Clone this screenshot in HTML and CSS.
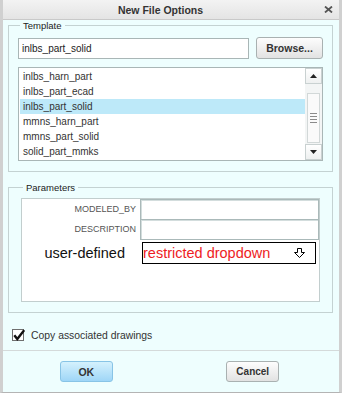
FILE: index.html
```html
<!DOCTYPE html>
<html>
<head>
<meta charset="utf-8">
<link rel="stylesheet" href="styles.css">
</head>
<body>
<div class="window">
  <div class="titlebar">
    <span class="title">New File Options</span>
    <span class="close"><svg width="9" height="7" viewBox="0 0 9 7"><path d="M1 0.5 L8 6.5 M8 0.5 L1 6.5" stroke="#555" stroke-width="1.8" fill="none"/></svg></span>
  </div>
  <div class="content">
    <fieldset class="group group-template">
      <legend>Template</legend>
      <div class="template-row">
        <div class="textfield">inlbs_part_solid</div>
        <button class="btn btn-browse">Browse...</button>
      </div>
      <div class="listbox">
        <ul class="items">
          <li>inlbs_harn_part</li>
          <li>inlbs_part_ecad</li>
          <li class="selected">inlbs_part_solid</li>
          <li>mmns_harn_part</li>
          <li>mmns_part_solid</li>
          <li>solid_part_mmks</li>
        </ul>
        <div class="scrollbar">
          <div class="sb-btn"><svg width="7" height="4" viewBox="0 0 7 4"><polygon points="0,4 3.5,0 7,4" fill="#222"/></svg></div>
          <div class="sb-track"><div class="sb-thumb"><div class="grip"></div></div></div>
          <div class="sb-btn"><svg width="7" height="4" viewBox="0 0 7 4"><polygon points="0,0 7,0 3.5,4" fill="#222"/></svg></div>
        </div>
      </div>
    </fieldset>
    <fieldset class="group group-params">
      <legend>Parameters</legend>
      <div class="ptable">
        <div class="prow"><span class="plabel">MODELED_BY</span><div class="pcell"></div></div>
        <div class="prow prow-desc"><span class="plabel">DESCRIPTION</span><div class="pcell"></div></div>
        <div class="prow-user">
          <span class="ulabel">user-defined</span>
          <div class="dropdown"><span>restricted dropdown</span><svg width="11" height="10" viewBox="0 0 11 10"><polygon points="3.5,0.5 7.5,0.5 7.5,4.5 10.5,4.5 5.5,9.5 0.5,4.5 3.5,4.5" fill="#fff" stroke="#000" stroke-width="1"/></svg></div>
        </div>
      </div>
    </fieldset>
    <div class="check-row">
      <svg class="checkbox" width="13" height="13" viewBox="0 0 13 13"><rect x="0.5" y="0.5" width="11" height="11" fill="#fff" stroke="#6f6f6f"/><path d="M2.3 6.2 L5.3 10 L12.2 1.2" stroke="#111" stroke-width="2.4" fill="none"/></svg>
      <span>Copy associated drawings</span>
    </div>
  </div>
  <div class="footer">
    <button class="btn btn-ok">OK</button>
    <button class="btn btn-cancel">Cancel</button>
  </div>
</div>
</body>
</html>
```
FILE: styles.css
```css
body {
  margin: 0;
  background: #fff;
  font-family: "Liberation Sans", Arial, sans-serif;
}
.window {
  width: 342px;
  height: 393px;
  box-sizing: border-box;
  border-left: 3px solid #d0d0d0;
  border-right: 3px solid #d0d0d0;
  border-bottom: 1px solid #b4b4b4;
  background: #eefefe;
  display: flex;
  flex-direction: column;
}
.titlebar {
  height: 19px;
  flex-shrink: 0;
  border-bottom: 1px solid #c9c9c9;
  background: linear-gradient(#f3f3f3, #e4e4e4);
  display: flex;
  align-items: center;
}
.title {
  flex: 1;
  text-align: center;
  font-weight: bold;
  font-size: 10.5px;
  color: #333;
}
.close {
  width: 21px;
  display: flex;
  justify-content: center;
}
.content {
  flex: 1;
  display: flex;
  flex-direction: column;
  padding: 0 6px 0 5px;
}
.group {
  margin: 0;
  border: 1px solid #c4d2d2;
  min-width: 0;
}
.group legend {
  font-size: 9.5px;
  line-height: 11px;
  padding: 0 3px;
  margin-left: 2px;
  color: #222;
}
.group-template {
  padding: 6px 9px 10px;
}
.group-params {
  margin-top: 10px;
  padding: 5px 12px 10px;
}
.template-row {
  display: flex;
  align-items: flex-end;
  gap: 7px;
}
.textfield {
  flex: 1;
  height: 21px;
  box-sizing: border-box;
  border: 1px solid #a9b6b6;
  background: #fff;
  font-size: 10px;
  line-height: 19px;
  padding-left: 3px;
  color: #222;
}
.btn {
  font-family: inherit;
  font-weight: bold;
  font-size: 10.5px;
  color: #333;
  border: 1px solid #a9b1b1;
  border-radius: 3px;
  background: linear-gradient(#fdfdfd, #e2e2e2);
  padding: 0;
  box-sizing: border-box;
}
.btn-browse {
  width: 67px;
  height: 22px;
}
.listbox {
  margin-top: 8px;
  height: 94px;
  box-sizing: border-box;
  border: 1px solid #a9b6b6;
  background: #fff;
  display: flex;
}
.items {
  list-style: none;
  margin: 0;
  padding: 1px 0 0 1px;
  flex: 1;
}
.items li {
  height: 15px;
  line-height: 15px;
  padding-left: 3px;
  font-size: 10px;
  color: #333;
}
.items li.selected {
  background: #bde9f9;
}
.scrollbar {
  width: 17px;
  display: flex;
  flex-direction: column;
  background: #f3f5f5;
}
.sb-btn {
  height: 16px;
  box-sizing: border-box;
  border: 1px solid #c9d1d1;
  background: linear-gradient(#fff, #eef0f0);
  display: flex;
  align-items: center;
  justify-content: center;
}
.sb-track {
  flex: 1;
  display: flex;
  flex-direction: column;
  align-items: center;
}
.sb-thumb {
  margin-top: 9px;
  width: 13px;
  height: 50px;
  box-sizing: border-box;
  border: 1px solid #d2d8d8;
  background: #fafafa;
  display: flex;
  align-items: center;
  justify-content: center;
}
.grip {
  width: 7px;
  height: 11px;
  background: repeating-linear-gradient(#8a8a8a 0 1px, transparent 1px 3px);
}
.ptable {
  height: 104px;
  box-sizing: border-box;
  border: 1px solid #c2cece;
  background: #fff;
}
.prow {
  display: flex;
  height: 21px;
}
.prow-desc {
  margin-top: -1px;
}
.plabel {
  width: 118px;
  box-sizing: border-box;
  text-align: right;
  padding-right: 4px;
  font-size: 9px;
  color: #555;
  line-height: 21px;
}
.pcell {
  width: 179px;
  box-sizing: border-box;
  border: 1px solid #aab9b9;
  box-shadow: inset 1px 1px 0 #d3dddd;
  background: #fff;
}
.prow-user {
  display: flex;
  align-items: center;
  margin-top: 2px;
  height: 22px;
}
.ulabel {
  width: 118px;
  box-sizing: border-box;
  text-align: right;
  padding-right: 15px;
  font-size: 14.5px;
  color: #111;
}
.dropdown {
  margin-left: 2px;
  width: 174px;
  height: 22px;
  box-sizing: border-box;
  border: 1px solid #000;
  display: flex;
  align-items: center;
  justify-content: space-between;
  padding-right: 10px;
  font-size: 14.5px;
  color: #ee1c24;
}
.check-row {
  display: flex;
  align-items: center;
  gap: 6px;
  margin-top: 16px;
  margin-left: 4px;
  height: 13px;
  font-size: 10.4px;
  color: #333;
}
.checkbox {
  display: block;
}
.footer {
  height: 42px;
  flex-shrink: 0;
  box-sizing: border-box;
  border-top: 1px solid #d4dada;
  padding: 10px 3px 0 0;
  display: grid;
  grid-template-columns: 1fr 1fr;
  justify-items: center;
  align-items: start;
}
.btn-ok,
.btn-cancel {
  width: 53px;
  height: 21px;
}
.btn-ok {
  background: linear-gradient(#d4f1fd, #9fd6f7);
  border-color: #88c4e6;
}
.btn-cancel {
  font-size: 10px;
}
```
